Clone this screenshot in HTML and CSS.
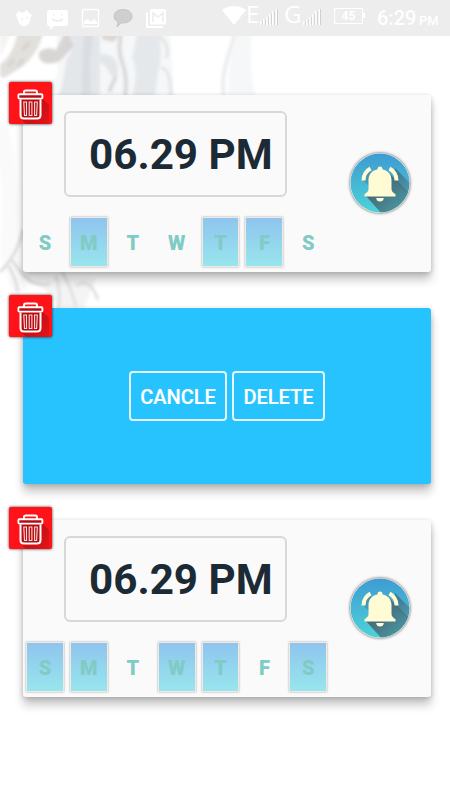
FILE: index.html
```html
<!DOCTYPE html>
<html>
<head>
<meta charset="utf-8">
<title>Alarm</title>
<link rel="stylesheet" href="styles.css">
</head>

<body>
<svg class="defs" width="0" height="0">
	<defs>
		<linearGradient id="sky" x1="0" y1="0" x2="0" y2="1"><stop offset="0" stop-color="#3e9bd2"/><stop offset="1" stop-color="#4dd2d8"/></linearGradient>
		<linearGradient id="shade" x1="0" y1="0" x2="1" y2="1"><stop offset="0.2" stop-color="#47636f"/><stop offset="1" stop-color="#47636f" stop-opacity="0.25"/></linearGradient>
		<linearGradient id="red" x1="0" y1="0" x2="1" y2="1"><stop offset="0.3" stop-color="#900c10"/><stop offset="1" stop-color="#d41419"/></linearGradient>
		<clipPath id="round"><circle cx="30" cy="30" r="29.5"/></clipPath>
		<filter id="soft" x="-20%" y="-20%" width="140%" height="140%"><feGaussianBlur stdDeviation="1.6"/></filter>
	</defs>
	<symbol id="trash" viewBox="0 0 42 42">
		<path d="M32 15L40 23V42H17L13 38Z" fill="url(#red)" opacity="0.6"/>
		<path d="M12 17H31L30 36H13Z" fill="#b30d12"/>
		<path d="M15 12V10Q15 8.500 17 8.500H26Q28 8.500 28 10V12" fill="none" stroke="#fff" stroke-width="1.9"/>
		<rect x="9.400" y="12.200" width="24" height="4.400" rx="1" fill="#b30d12" stroke="#fff" stroke-width="1.9"/>
		<path d="M11.500 17.500V33Q11.500 36.500 15 36.500H28Q31.500 36.500 31.500 33V17.500" fill="none" stroke="#fff" stroke-width="2"/>
		<path d="M14.800 20H17.500V33.500H15.500ZM20.200 20H22.900V33.500H20.200ZM25.600 20H28.300L27.600 33.500H25.600Z" fill="none" stroke="#ffdcdc" stroke-width="1.1"/>
	</symbol>
	<symbol id="bell" viewBox="0 0 60 60">
		<circle cx="30" cy="30" r="29.5" fill="url(#sky)"/>
		<g clip-path="url(#round)">
			<path d="M36 17L64 45V70H40L16 43L40 40Z" fill="url(#shade)"/>
			<path d="M45 15L64 34V46L44 27Z" fill="url(#shade)" opacity="0.7"/>
			<path d="M19 16L27 24L20 34L12 26Z" fill="#47636f" opacity="0.35"/>
		</g>
		<path d="M13.500 27.500Q13.500 19.500 20.500 15.500" fill="none" stroke="#fffbd5" stroke-width="4"/>
		<path d="M46.500 27.500Q46.500 19.500 39.500 15.500" fill="none" stroke="#fffbd5" stroke-width="4"/>
		<path d="M30 13.500C31.500 13.500 32.600 14.600 32.600 16.500C38 17.500 41.500 21.500 41.500 27V36Q41.500 39 45.500 41.200V43.500H14.500V41.200Q18.500 39 18.500 36V27C18.500 21.500 22 17.500 27.400 16.500C27.400 14.600 28.500 13.500 30 13.500Z" fill="#fffbd5"/>
		<path d="M26.200 45H33.800Q33.400 48.500 30 48.500T26.200 45Z" fill="#fffbd5"/>
	</symbol>
	<symbol id="signal" viewBox="0 0 18 18">
		<path d="M1 17V13M4 17V11M7 17V9M10 17V6M13 17V3M16.500 17V1" stroke="#fff" stroke-width="1.8"/>
		<path d="M2.300 17V13M5.300 17V11M8.300 17V9M11.300 17V6M14.300 17V3M17.500 17V1" stroke="#ccc" stroke-width="0.9"/>
	</symbol>
</svg>

<!-- faded branch behind the cards -->
<svg class="photo" width="450" height="310" viewBox="0 0 450 310">
	<g filter="url(#soft)">
		<path d="M56 30H170L174 100H42L58 72Z" fill="#f5f7f8"/>
		<path d="M0 30H12L0 58Z" fill="#f4f3f1"/>
		<path d="M18 30H44Q38 56 20 68L4 78L0 76V64Q14 55 18 30Z" fill="#e2e0dd"/>
		<path d="M22 50L30 42M8 66L14 60M18 66L23 59" stroke="#d6d0c8" stroke-width="3"/>
		<path d="M66 30H90Q70 50 61 60Q54 65 44 63Q36 58 40 51Q48 46 56 50Z" fill="#d8d6d5"/>
		<path d="M66 30H100V98H58Q64 80 66 60L74 46Z" fill="#e4e7ea"/>
		<path d="M84 30H94L90 62L91 98H81Z" fill="#dadde1"/>
		<path d="M100 30H122L114 42L103 40Z" fill="#ddd8d3"/>
		<path d="M100 54Q117 53 118 70Q118 80 112 76Q104 64 100 62Z" fill="#e2e6e8"/>
		<path d="M122 30Q117 48 122 62Q128 76 125 98M116 76L109 92" fill="none" stroke="#d9d9d9" stroke-width="4"/>
		<path d="M138 30H159Q163 58 158 72L155 98H132Q139 70 132 58Z" fill="#e5e8eb"/>
		<path d="M160 36Q171 48 166 58M161 68Q171 68 171 98" fill="none" stroke="#e2e3e5" stroke-width="3"/>
		<path d="M236 30Q230 50 226 64Q221 80 224 98" fill="none" stroke="#ededef" stroke-width="4"/>
		<path d="M238 30H252Q248 70 256 98H229Q226 70 238 30Z" fill="#f6f7f8"/>
	</g>
	<g filter="url(#soft)" fill="none">
		<path d="M0 125Q14 180 8 250L20 292" stroke="#fafafb" stroke-width="16"/>
		<path d="M34 278H96L84 308H60Z" fill="#f4f4f5"/>
		<path d="M23 230Q17 256 0 272M12 260Q22 276 32 282Q42 286 50 284M9 266Q16 280 18 292" stroke="#dcdcdc" stroke-width="3"/>
		<path d="M56 276Q62 294 58 308M62 272Q70 284 76 306M76 286Q90 276 98 300" stroke="#e0e0e2" stroke-width="3"/>
	</g>
</svg>

<div class="status">
	<svg width="170" height="36" viewBox="0 0 170 36" fill="#fff">
		<path d="M18 11L22 13L27 10L29 13L32 15L30 19Q31 24 25 26Q19 26 18 20L16 15Z"/>
		<path d="M22 18V20M27 17V19" stroke="#ededed" stroke-width="1.5"/>
		<path d="M49 10H66Q68 10 68 12V24Q68 26 66 26H54L50 30V26H49Q47 26 47 24V12Q47 10 49 10Z"/>
		<path d="M52 19Q57.500 23 63 19M53 15H54.500M61 15H62.500" fill="none" stroke="#ededed" stroke-width="1.6"/>
		<rect x="82.500" y="9.500" width="16" height="17" rx="1" fill="none" stroke="#fff" stroke-width="1.4"/>
		<path d="M84 24V21L88 19L91 22L94 19L97 22V24Z"/>
		<path d="M123 9.500C129 9.500 132 12.500 132 16.500C132 21 127 23.500 121 23L117 27L118 22Q114 20 114 16.500C114 12.500 117 9.500 123 9.500Z" fill="#cfcfcf" stroke="#bcbcbc" stroke-width="0.7"/>
		<path d="M147 12.500V27H163" fill="none" stroke="#fff" stroke-width="1.800"/>
		<rect x="150" y="9" width="16" height="15.500" rx="1.500"/>
		<path d="M153 22V13L158 17L163 13V22" fill="none" stroke="#ededed" stroke-width="1.600"/>
	</svg>
	<div class="right">
		<svg class="wifi" width="24" height="20" viewBox="0 0 24 20"><path d="M0 5Q12 -3 24 5L12 20Z" fill="#fff"/></svg>
		<span class="net e">E</span>
		<svg class="bars" width="18" height="18"><use href="#signal"/></svg>
		<span class="net g">G</span>
		<svg class="bars" width="18" height="18"><use href="#signal"/></svg>
		<span class="battery">45</span>
		<span class="clock">6:29</span>
		<span class="pm">PM</span>
	</div>
</div>

<div class="list">
	<div class="card">
		<div class="del"><svg width="42" height="42"><use href="#trash"/></svg></div>
		<div class="top">
			<div class="time">06.29 PM</div>
			<div class="ring"><svg width="60" height="60"><use href="#bell"/></svg></div>
		</div>
		<ul class="days">
			<li>S</li>
			<li class="on">M</li>
			<li>T</li>
			<li>W</li>
			<li class="on">T</li>
			<li class="on">F</li>
			<li>S</li>
		</ul>
	</div>
	<div class="card confirm">
		<div class="del"><svg width="42" height="42"><use href="#trash"/></svg></div>
		<div class="btn">CANCLE</div>
		<div class="btn b2">DELETE</div>
	</div>
	<div class="card">
		<div class="del"><svg width="42" height="42"><use href="#trash"/></svg></div>
		<div class="top">
			<div class="time">06.29 PM</div>
			<div class="ring"><svg width="60" height="60"><use href="#bell"/></svg></div>
		</div>
		<ul class="days">
			<li class="on">S</li>
			<li class="on">M</li>
			<li>T</li>
			<li class="on">W</li>
			<li class="on">T</li>
			<li>F</li>
			<li class="on">S</li>
		</ul>
	</div>
</div>
</body>
</html>
```
FILE: styles.css
```css
body{margin:0; width:450px; height:800px; overflow:hidden; background:#fff; font-family:Roboto, "Liberation Sans", sans-serif; position:relative;}
svg{display:block;}
.defs{position:absolute;}
.photo{position:absolute; top:0; left:0;}

.status{position:relative; height:36px; background:#ededed; display:flex; justify-content:space-between; color:#fff;}
.right{display:flex; align-items:flex-start; padding-right:11px;}
.wifi{margin-top:5px;}
.net{font-family:"Open Sans", sans-serif; font-size:24px; line-height:28px;}
.e{width:14px;}
.g{width:19px; margin-left:6px;}
.bars{margin-top:8px;}
.battery{box-sizing:border-box; width:29px; height:16px; margin:8px 0 0 13px; border:1px solid #fff; font-size:12px; font-weight:bold; line-height:15px; text-align:center; position:relative;}
.battery:after{content:""; position:absolute; right:-3px; top:4px; width:2px; height:5px; background:#fff;}
.clock{width:38px; margin-left:14px; font-size:20px; line-height:37px; font-weight:500;}
.pm{width:20px; margin-left:4px; font-size:13px; line-height:41px; font-weight:500;}

.list{position:relative; padding:59px 19px 0 23px;}
.card{position:relative; height:176.500px; margin-bottom:36px; background:#fafafa; border-radius:3px; box-shadow:0 8px 10px rgba(0,0,0,.22), 0 1px 5px rgba(0,0,0,.2);}
.del{position:absolute; left:-14px; top:-13px; width:43px; height:42px; background:#ff1218; border-radius:2px; box-shadow:0 0 3px rgba(0,0,0,.8);}

.top{display:flex; height:86px; padding:16px 0 0 41px;}
.time{box-sizing:border-box; width:223px; height:86px; border:2px solid #d8d8d8; border-radius:6px; padding-left:23px; font-size:42.200px; line-height:84px; font-weight:bold; color:#1c2a35; white-space:nowrap;}
.ring{width:60px; height:60px; margin:42px 0 0 63px; border-radius:50%; box-shadow:0 0 3px rgba(0,0,0,.7);}

.days{list-style:none; margin:20px 0 0 3px; padding:0; display:flex; gap:6px;}
.days li{width:37.900px; height:50px; line-height:53px; text-align:center; font-size:20px; font-weight:900; color:#80cbc4;}
.days .on{background:linear-gradient(#8fc4ee, #98e6ee); box-shadow:inset 0 0 0 1px #eee9e2, 0 0 2px rgba(0,0,0,.35);}

.confirm{background:#26c3ff; display:flex; justify-content:center; align-items:center; gap:5px;}
.btn{box-sizing:border-box; width:98px; height:50px; border:2px solid #e6f8ff; border-radius:4px; line-height:48px; text-align:center; font-size:20px; font-weight:500; color:#fff; -webkit-text-stroke:.2px #fff;}
.b2{width:93px;}
```
